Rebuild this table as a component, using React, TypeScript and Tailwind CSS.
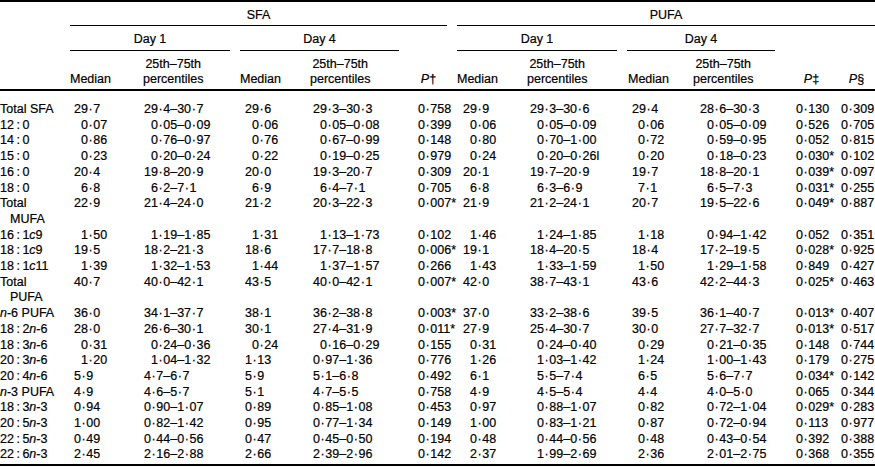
import React from 'react';

interface DataRow {
  label: React.ReactNode;
  sfa: string[];
  si: string;
  pufa: string[];
  pi: string;
}

const Lbl = ({ a, b }: { a: React.ReactNode; b: React.ReactNode }) => (
  <>
    {a}
    {'\u2009:\u2009'}
    {b}
  </>
);

// the journal font sets the decimal middle dot a little wider than Arial does
function Num({ v }: { v: string }) {
  const parts = v.split('·');
  return (
    <>
      {parts.map((p, i) => (
        <React.Fragment key={i}>
          {i > 0 && <span className="px-[0.6px]">·</span>}
          {p}
        </React.Fragment>
      ))}
    </>
  );
}

const rows: DataRow[] = [
  { label: 'Total SFA', sfa: ['29·7', '29·4–30·7', '29·6', '29·3–30·3', '0·758'], si: '0000', pufa: ['29·9', '29·3–30·6', '29·4', '28·6–30·3', '0·130', '0·309'], pi: '0000' },
  { label: <Lbl a="12" b="0" />, sfa: ['0·07', '0·05–0·09', '0·06', '0·05–0·08', '0·399'], si: '1111', pufa: ['0·06', '0·05–0·09', '0·06', '0·05–0·09', '0·526', '0·705'], pi: '1111' },
  { label: <Lbl a="14" b="0" />, sfa: ['0·86', '0·76–0·97', '0·76', '0·67–0·99', '0·148'], si: '1111', pufa: ['0·80', '0·70–1·00', '0·72', '0·59–0·95', '0·052', '0·815'], pi: '1111' },
  { label: <Lbl a="15" b="0" />, sfa: ['0·23', '0·20–0·24', '0·22', '0·19–0·25', '0·979'], si: '1111', pufa: ['0·24', '0·20–0·26l', '0·20', '0·18–0·23', '0·030*', '0·102'], pi: '1111' },
  { label: <Lbl a="16" b="0" />, sfa: ['20·4', '19·8–20·9', '20·0', '19·3–20·7', '0·309'], si: '0000', pufa: ['20·1', '19·7–20·9', '19·7', '18·8–20·1', '0·039*', '0·097'], pi: '0000' },
  { label: <Lbl a="18" b="0" />, sfa: ['6·8', '6·2–7·1', '6·9', '6·4–7·1', '0·705'], si: '1111', pufa: ['6·8', '6·3–6·9', '7·1', '6·5–7·3', '0·031*', '0·255'], pi: '1111' },
  {
    label: (
      <>
        Total
        <span className="block pl-[10px]">MUFA</span>
      </>
    ),
    sfa: ['22·9', '21·4–24·0', '21·2', '20·3–22·3', '0·007*'], si: '0000',
    pufa: ['21·9', '21·2–24·1', '20·7', '19·5–22·6', '0·049*', '0·887'], pi: '0000',
  },
  { label: <Lbl a="16" b={<>1<i>c</i>9</>} />, sfa: ['1·50', '1·19–1·85', '1·31', '1·13–1·73', '0·102'], si: '1111', pufa: ['1·46', '1·24–1·85', '1·18', '0·94–1·42', '0·052', '0·351'], pi: '1111' },
  { label: <Lbl a="18" b={<>1<i>c</i>9</>} />, sfa: ['19·5', '18·2–21·3', '18·6', '17·7–18·8', '0·006*'], si: '0000', pufa: ['19·1', '18·4–20·5', '18·4', '17·2–19·5', '0·028*', '0·925'], pi: '0000' },
  { label: <Lbl a="18" b={<>1<i>c</i>11</>} />, sfa: ['1·39', '1·32–1·53', '1·44', '1·37–1·57', '0·266'], si: '1111', pufa: ['1·43', '1·33–1·59', '1·50', '1·29–1·58', '0·849', '0·427'], pi: '1111' },
  {
    label: (
      <>
        Total
        <span className="block pl-[10px]">PUFA</span>
      </>
    ),
    sfa: ['40·7', '40·0–42·1', '43·5', '40·0–42·1', '0·007*'], si: '0000',
    pufa: ['42·0', '38·7–43·1', '43·6', '42·2–44·3', '0·025*', '0·463'], pi: '0000',
  },
  { label: <><i>n</i>-6 PUFA</>, sfa: ['36·0', '34·1–37·7', '38·1', '36·2–38·8', '0·003*'], si: '0000', pufa: ['37·0', '33·2–38·6', '39·5', '36·1–40·7', '0·013*', '0·407'], pi: '0000' },
  { label: <Lbl a="18" b={<>2<i>n</i>-6</>} />, sfa: ['28·0', '26·6–30·1', '30·1', '27·4–31·9', '0·011*'], si: '0000', pufa: ['27·9', '25·4–30·7', '30·0', '27·7–32·7', '0·013*', '0·517'], pi: '0000' },
  { label: <Lbl a="18" b={<>3<i>n</i>-6</>} />, sfa: ['0·31', '0·24–0·36', '0·24', '0·16–0·29', '0·155'], si: '1111', pufa: ['0·31', '0·24–0·40', '0·29', '0·21–0·35', '0·148', '0·744'], pi: '1111' },
  { label: <Lbl a="20" b={<>3<i>n</i>-6</>} />, sfa: ['1·20', '1·04–1·32', '1·13', '0·97–1·36', '0·776'], si: '1100', pufa: ['1·26', '1·03–1·42', '1·24', '1·00–1·43', '0·179', '0·275'], pi: '1111' },
  { label: <Lbl a="20" b={<>4<i>n</i>-6</>} />, sfa: ['5·9', '4·7–6·7', '5·9', '5·1–6·8', '0·492'], si: '0000', pufa: ['6·1', '5·5–7·4', '6·5', '5·6–7·7', '0·034*', '0·142'], pi: '1111' },
  { label: <><i>n</i>-3 PUFA</>, sfa: ['4·9', '4·6–5·7', '5·1', '4·7–5·5', '0·758'], si: '0000', pufa: ['4·9', '4·5–5·4', '4·4', '4·0–5·0', '0·065', '0·344'], pi: '1111' },
  { label: <Lbl a="18" b={<>3<i>n</i>-3</>} />, sfa: ['0·94', '0·90–1·07', '0·89', '0·85–1·08', '0·453'], si: '0000', pufa: ['0·97', '0·88–1·07', '0·82', '0·72–1·04', '0·029*', '0·283'], pi: '1111' },
  { label: <Lbl a="20" b={<>5<i>n</i>-3</>} />, sfa: ['1·00', '0·82–1·42', '0·95', '0·77–1·34', '0·149'], si: '0000', pufa: ['1·00', '0·83–1·21', '0·87', '0·72–0·94', '0·113', '0·977'], pi: '1111' },
  { label: <Lbl a="22" b={<>5<i>n</i>-3</>} />, sfa: ['0·49', '0·44–0·56', '0·47', '0·45–0·50', '0·194'], si: '0000', pufa: ['0·48', '0·44–0·56', '0·48', '0·43–0·54', '0·392', '0·388'], pi: '1111' },
  { label: <Lbl a="22" b={<>6<i>n</i>-3</>} />, sfa: ['2·45', '2·16–2·88', '2·66', '2·39–2·96', '0·142'], si: '0000', pufa: ['2·37', '1·99–2·69', '2·36', '2·01–2·75', '0·368', '0·355'], pi: '1111' },
];

// left padding per column: [normal, indented by one digit]
const sfaPad = [
  ['pl-[4px]', 'pl-[11px]'],
  ['pl-[4px]', 'pl-[11px]'],
  ['pl-[5px]', 'pl-[12px]'],
  ['pl-[3px]', 'pl-[10px]'],
];
const pufaPad = [
  ['pl-[6px]', 'pl-[13px]'],
  ['pl-[3px]', 'pl-[10px]'],
  ['pl-[5px]', 'pl-[11px]'],
  ['pl-[7px]', 'pl-[14px]'],
];

const grid =
  'grid grid-cols-[70px_70px_90px_10px_70px_89px_11px_37px_10px_70px_90px_10px_66px_82px_10px_53px_37px]';

function RangeHead() {
  return (
    <span className="inline-block text-center">
      25th–75th
      <br />
      percentiles
    </span>
  );
}

function App() {
  return (
    <div className="w-[875px] h-[469px] overflow-hidden bg-white text-black [-webkit-text-stroke:0.2px_black] font-['Liberation_Sans',Arial,sans-serif] text-[12.5px] leading-[15px]">
      {/* Header */}
      <div className={`${grid} border-t-2 border-b-2 border-black`}>
        <div />
        <div className="col-span-7 text-center border-b border-black pt-[6px] pb-[2px]">SFA</div>
        <div />
        <div className="col-span-8 text-center border-b border-black pt-[6px] pb-[2px]">PUFA</div>

        <div />
        <div className="col-span-2 text-center border-b border-black pt-[6px] pb-[3px]">Day 1</div>
        <div />
        <div className="col-span-2 text-center border-b border-black pt-[6px] pb-[3px]">Day 4</div>
        <div className="col-span-3" />
        <div className="col-span-2 text-center border-b border-black pt-[6px] pb-[3px]">Day 1</div>
        <div />
        <div className="col-span-2 text-center border-b border-black pt-[6px] pb-[3px]">Day 4</div>
        <div className="col-span-3" />

        <div />
        <div className="self-end pb-[2px]">Median</div>
        <div className="pt-[6px] pb-[2px] pl-[3px]">
          <RangeHead />
        </div>
        <div />
        <div className="self-end pb-[2px]">Median</div>
        <div className="pt-[6px] pb-[2px]">
          <RangeHead />
        </div>
        <div />
        <div className="self-end pb-[2px] text-center">
          <i>P</i>†
        </div>
        <div />
        <div className="self-end pb-[2px]">Median</div>
        <div className="pt-[6px] pb-[2px]">
          <RangeHead />
        </div>
        <div />
        <div className="self-end pb-[2px] pl-[1px]">Median</div>
        <div className="pt-[6px] pb-[2px]">
          <RangeHead />
        </div>
        <div />
        <div className="self-end pb-[2px] text-center">
          <i>P</i>‡
        </div>
        <div className="self-end pb-[2px] text-center">
          <i>P</i>§
        </div>
      </div>

      {/* Body */}
      <div className={`${grid} border-b-2 border-black pt-[11px] pb-[1px] leading-[15.7px] whitespace-nowrap`}>
        {rows.map((r, i) => (
          <React.Fragment key={i}>
            <div>{r.label}</div>
            <div className={sfaPad[0][Number(r.si[0])]}><Num v={r.sfa[0]} /></div>
            <div className={sfaPad[1][Number(r.si[1])]}><Num v={r.sfa[1]} /></div>
            <div />
            <div className={sfaPad[2][Number(r.si[2])]}><Num v={r.sfa[2]} /></div>
            <div className={sfaPad[3][Number(r.si[3])]}><Num v={r.sfa[3]} /></div>
            <div />
            <div className="pl-[8px]"><Num v={r.sfa[4]} /></div>
            <div />
            <div className={pufaPad[0][Number(r.pi[0])]}><Num v={r.pufa[0]} /></div>
            <div className={pufaPad[1][Number(r.pi[1])]}><Num v={r.pufa[1]} /></div>
            <div />
            <div className={pufaPad[2][Number(r.pi[2])]}><Num v={r.pufa[2]} /></div>
            <div className={pufaPad[3][Number(r.pi[3])]}><Num v={r.pufa[3]} /></div>
            <div />
            <div className="pl-[11px]"><Num v={r.pufa[4]} /></div>
            <div className="pl-[3px]"><Num v={r.pufa[5]} /></div>
          </React.Fragment>
        ))}
      </div>
    </div>
  );
}

export default App;
